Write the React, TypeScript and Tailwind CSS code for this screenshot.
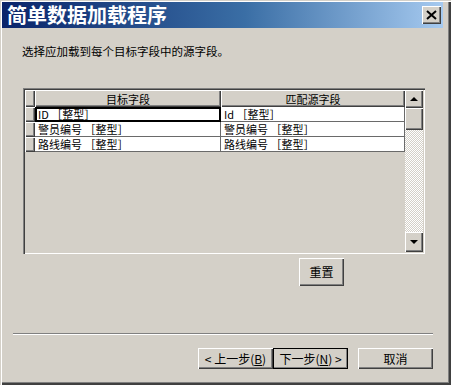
import React from "react";

const FONT = { fontFamily: '"Noto Sans CJK SC", "Liberation Sans", sans-serif' };

const raised =
  "bg-[#d4d0c8] shadow-[inset_1px_1px_0_#fff,inset_-1px_-1px_0_#404040,inset_-2px_-2px_0_#808080]";

function RowHead() {
  return <div className={`w-[10px] h-full shrink-0 ${raised}`} />;
}

function Cell({ text, focus }: { text: string; focus?: boolean }) {
  return (
    <div
      className={`h-full flex items-center pl-[3px] bg-white border-r border-b border-[#6a6a6a] overflow-hidden ${
        focus ? "outline-2 outline-black -outline-offset-2" : ""
      }`}
    >
      <span className="text-[11px] leading-[12px] text-black whitespace-nowrap">{text}</span>
    </div>
  );
}

function WinButton({
  children,
  width,
  isDefault,
}: {
  children: React.ReactNode;
  width: string;
  isDefault?: boolean;
}) {
  return (
    <button
      className={`${width} h-full flex items-center justify-center text-[12px] text-black ${raised} ${
        isDefault ? "outline outline-black -outline-offset-1" : ""
      }`}
    >
      {children}
    </button>
  );
}

const rows = [
  ["ID ［整型］", "Id ［整型］"],
  ["警员编号 ［整型］", "警员编号 ［整型］"],
  ["路线编号 ［整型］", "路线编号 ［整型］"],
];

export default function App() {
  return (
    <div
      style={FONT}
      className="w-[451px] h-[385px] bg-[#d4d0c8] flex flex-col shadow-[inset_1px_1px_0_#d4d0c8,inset_2px_2px_0_#fff,inset_-1px_-1px_0_#404040,inset_-2px_-2px_0_#404040,inset_-3px_-3px_0_#808080]"
    >
      {/* title bar */}
      <div className="ml-[2px] mt-[2px] w-[441px] h-[26px] flex items-center justify-between pl-[5px] pr-[2px] bg-[linear-gradient(to_right,#0a246a,#3a6ea5_55%,#a6caf0)]">
        <span className="text-white text-[20px] font-bold leading-none">
          简单数据加载程序
        </span>
        <div className={`w-[19px] h-[18px] flex items-center justify-center ${raised}`}>
          <svg width="11" height="10" viewBox="0 0 11 10">
            <path d="M1 1 L10 9 M10 1 L1 9" stroke="#000" strokeWidth="2" />
          </svg>
        </div>
      </div>

      <p className="ml-[22px] mt-[16px] h-[14px] text-[11.5px] leading-[14px] text-black">
        选择应加载到每个目标字段中的源字段。
      </p>

      {/* grid */}
      <div className="ml-[23px] mt-[30px] w-[402px] h-[166px] p-[2px] flex shadow-[inset_1px_1px_0_#808080,inset_2px_2px_0_#404040,inset_-1px_-1px_0_#fff,inset_-2px_-2px_0_#d4d0c8]">
        <div className="w-[380px] flex flex-col">
          <div className="h-[17px] flex">
            <RowHead />
            <div className={`w-[186px] h-full flex items-center justify-center text-[11px] leading-[12px] ${raised}`}>
              目标字段
            </div>
            <div className={`w-[184px] h-full flex items-center justify-center text-[11px] leading-[12px] ${raised}`}>
              匹配源字段
            </div>
          </div>
          {rows.map((r, i) => (
            <div key={i} className="h-[15px] flex">
              <RowHead />
              <div className="w-[186px] h-full">
                <Cell text={r[0]} focus={i === 0} />
              </div>
              <div className="w-[184px] h-full">
                <Cell text={r[1]} />
              </div>
            </div>
          ))}
        </div>
        <div className="w-[18px] flex flex-col">
          <div className={`h-[18px] flex items-center justify-center ${raised}`}>
            <div className="w-0 h-0 border-x-[4px] border-x-transparent border-b-[4px] border-b-black" />
          </div>
          <div className={`h-[22px] ${raised}`} />
          <div className="flex-1 bg-[repeating-conic-gradient(#ffffff_0%_25%,#d4d0c8_0%_50%)] bg-[length:2px_2px]" />
          <div className={`h-[20px] flex items-center justify-center ${raised}`}>
            <div className="w-0 h-0 border-x-[4px] border-x-transparent border-t-[4px] border-t-black" />
          </div>
        </div>
      </div>

      {/* reset */}
      <div className="ml-[299px] mt-[4px] h-[28px] flex">
        <WinButton width="w-[45px]">重置</WinButton>
      </div>

      {/* separator */}
      <div className="ml-[13px] mt-[47px] w-[420px] h-[2px] border-t border-t-[#808080] border-b border-b-white" />

      {/* buttons */}
      <div className="ml-[198px] mt-[13px] h-[21px] flex">
        <WinButton width="w-[75px]">
          &lt; 上一步(<u>B</u>)
        </WinButton>
        <WinButton width="w-[75px]" isDefault>
          下一步(<u>N</u>) &gt;
        </WinButton>
        <div className="w-[10px]" />
        <WinButton width="w-[75px]">取消</WinButton>
      </div>
    </div>
  );
}
